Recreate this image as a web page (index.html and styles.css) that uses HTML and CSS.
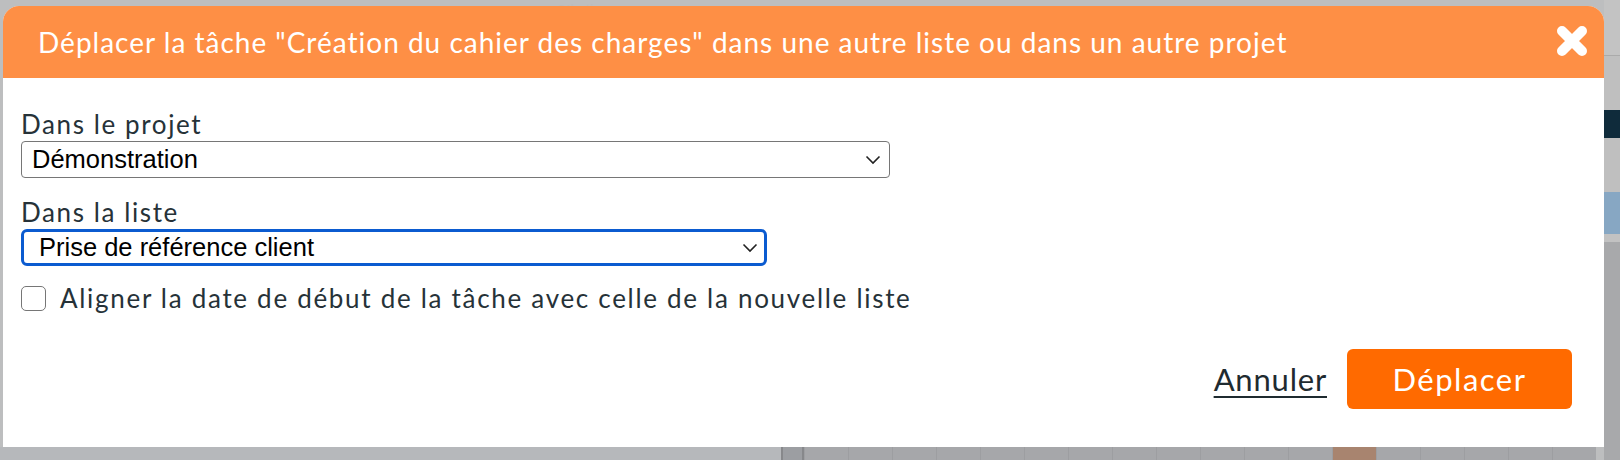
FILE: index.html
```html
<!DOCTYPE html>
<html lang="fr">
<head>
    <meta charset="UTF-8">
    <meta name="viewport" content="width=device-width, initial-scale=1.0">
    <title>Déplacer la tâche</title>
    <link rel="stylesheet" href="styles.css">
</head>
<body>

    <!-- Page behind the modal -->
    <div class="page">
        <div class="page-main">
            <div class="page-top">
                <span class="page-btn"><span class="page-btn-dot"></span>Sélectionner</span>
            </div>
            <div class="page-fill"></div>
            <div class="page-cells">
                <span class="cell cell-wide"></span>
                <span class="cell cell-dark"></span>
                <span class="cell"></span>
                <span class="cell"></span>
                <span class="cell"></span>
                <span class="cell"></span>
                <span class="cell"></span>
                <span class="cell"></span>
                <span class="cell"></span>
                <span class="cell"></span>
                <span class="cell"></span>
                <span class="cell"></span>
                <span class="cell"></span>
                <span class="cell"></span>
                <span class="cell cell-today"></span>
                <span class="cell"></span>
                <span class="cell"></span>
                <span class="cell"></span>
                <span class="cell"></span>
                <span class="cell"></span>
            </div>
        </div>
        <div class="page-side">
            <span class="side side-light"></span>
            <span class="side side-gray"></span>
            <span class="side side-navy"></span>
            <span class="side side-gray"></span>
            <span class="side side-blue"></span>
            <span class="side side-line"></span>
            <span class="side side-rest"></span>
        </div>
    </div>

    <!-- Move task modal -->
    <div class="modal">
        <div class="modal-header">
            <h3 class="modal-title">Déplacer la tâche "Création du cahier des charges" dans une autre liste ou dans un autre projet</h3>
            <span class="modal-close">
                <svg width="32" height="32" viewBox="0 0 32 32">
                    <path d="M6 6 L26 26 M26 6 L6 26" stroke="#fff" stroke-width="10" stroke-linecap="round" fill="none"/>
                </svg>
            </span>
        </div>

        <div class="modal-body">
            <label class="field-label">Dans le projet</label>
            <div class="select-box select-project">
                <span class="select-value">Démonstration</span>
                <svg class="chevron" width="16" height="10" viewBox="0 0 16 10">
                    <path d="M1.5 1.5 L8 8 L14.5 1.5" stroke="#222" stroke-width="1.6" fill="none"/>
                </svg>
            </div>

            <label class="field-label field-label-second">Dans la liste</label>
            <div class="select-box select-list focused">
                <span class="select-value">Prise de référence client</span>
                <svg class="chevron" width="16" height="10" viewBox="0 0 16 10">
                    <path d="M1.5 1.5 L8 8 L14.5 1.5" stroke="#222" stroke-width="1.6" fill="none"/>
                </svg>
            </div>

            <div class="check-row">
                <span class="checkbox"></span>
                <span class="check-label">Aligner la date de début de la tâche avec celle de la nouvelle liste</span>
            </div>

            <div class="modal-footer">
                <a class="link-cancel" href="#">Annuler</a>
                <button class="btn-move">Déplacer</button>
            </div>
        </div>
    </div>

</body>
</html>
```

FILE: styles.css
```css
/* Page behind the overlay */
body {
    margin: 0;
    font-family: Lato, "Noto Sans", sans-serif;
    background-color: #bdbebf;
    overflow: hidden;
}
.page {
    display: flex;
    height: 460px;
}
.page-main {
    flex: 1;
    display: flex;
    flex-direction: column;
}
.page-top {
    height: 6px;
    padding-left: 530px;
    overflow: hidden;
}
.page-btn {
    display: inline-flex;
    align-items: flex-end;
    width: 190px;
    height: 6px;
    background-color: #4a4a4a;
    color: #bbb;
    font-size: 12px;
}
.page-btn-dot {
    width: 4px;
    height: 4px;
    margin: 0 8px 0 16px;
    background: #999;
    border-radius: 50%;
}
.page-fill {
    flex: 1;
}
.page-cells {
    display: flex;
    height: 13px;
}
.cell {
    box-sizing: border-box;
    width: 44px;
    background-color: #a6a7aa;
    border-left: 1px solid #9d9ea1;
}
.cell-wide {
    width: 781px;
    background-color: #b6b8bb;
    border-left: none;
}
.cell-dark {
    width: 23px;
    background-color: #9c9ea2;
    border-left: 2px solid #87888b;
    border-right: 2px solid #87888b;
}
.cell-today {
    background-color: #a8846f;
}
.page-side {
    width: 16px;
    display: flex;
    flex-direction: column;
}
.side-light { height: 55px; background: #c3c3c3; border-bottom: 1px solid #aaa; }
.side-gray { height: 54px; background: #bfbfbf; }
.side-navy { height: 28px; background: #0f2b3b; }
.side-blue { height: 42px; background: #87a7c3; }
.side-line { height: 8px; background: #c2c2c2; }
.side-rest { flex: 1; background: #a8a9ab; }

/* Modal */
.modal {
    position: absolute;
    left: 3px;
    top: 6px;
    width: 1601px;
    height: 441px;
    background-color: white;
    border-radius: 16px 16px 0 0;
    overflow: hidden;
}
.modal-header {
    height: 72px;
    display: flex;
    align-items: center;
    justify-content: space-between;
    padding: 0 16px 0 35px;
    background-color: #fe8f45;
}
.modal-title {
    margin: 0;
    color: white;
    font-size: 28px;
    font-weight: normal;
    letter-spacing: 1px;
}
.modal-close {
    display: flex;
    margin-top: -2px;
    cursor: pointer;
}
.modal-body {
    display: flex;
    flex-direction: column;
    padding: 33px 32px 0 18px;
}
.field-label {
    font-size: 26px;
    line-height: 26px;
    letter-spacing: 1.6px;
    color: #263238;
}
.field-label-second {
    margin-top: 21px;
}

/* Select boxes */
.select-box {
    display: flex;
    align-items: center;
    justify-content: space-between;
    box-sizing: border-box;
    height: 37px;
    margin-top: 4px;
    padding: 0 8px 0 10px;
    border: 1px solid #767676;
    border-radius: 4px;
    background: white;
    font-family: "Liberation Sans", Arial, sans-serif;
    font-size: 25.5px;
    color: black;
}
.select-project {
    width: 869px;
}
.select-list {
    width: 746px;
    padding-left: 15px;
}
.select-box.focused {
    border: 3px solid #0b5bd0;
    border-radius: 6px;
    padding-right: 6px;
}

/* Checkbox */
.check-row {
    display: flex;
    align-items: center;
    gap: 14px;
    margin-top: 19px;
    height: 26px;
}
.checkbox {
    box-sizing: border-box;
    width: 25px;
    height: 25px;
    border: 1.5px solid #767676;
    border-radius: 5px;
    background: white;
}
.check-label {
    font-size: 26px;
    line-height: 26px;
    letter-spacing: 1.7px;
    color: #263238;
}

/* Footer */
.modal-footer {
    display: flex;
    justify-content: flex-end;
    align-items: center;
    gap: 20px;
    margin-top: 38px;
}
.link-cancel {
    color: #1f2b30;
    font-size: 31px;
    letter-spacing: 0.8px;
    text-decoration: underline;
    text-decoration-thickness: 2px;
    text-underline-offset: 5px;
}
.btn-move {
    width: 225px;
    height: 60px;
    border: none;
    border-radius: 6px;
    background-color: #ff6a00;
    color: white;
    font-family: Lato, "Noto Sans", sans-serif;
    font-size: 31px;
    letter-spacing: 1.5px;
    cursor: pointer;
}
```
